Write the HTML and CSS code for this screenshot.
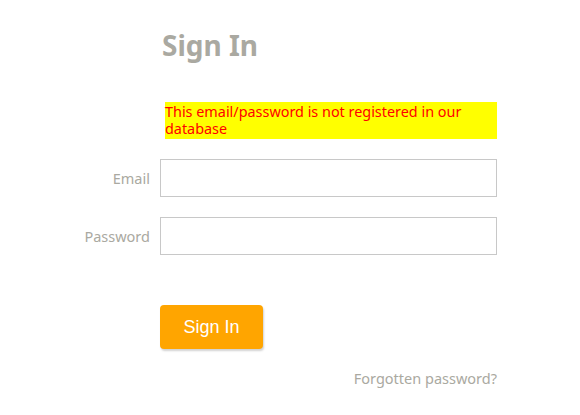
FILE: index.html
```html
<!DOCTYPE html>
<html>
<head>
<meta charset="utf-8">
<link rel="stylesheet" href="styles.css">
</head>
<body>
<div class="page">
  <h1 class="title">Sign In</h1>
  <div class="error">This email/password is not registered in our database</div>
  <form class="form">
    <label class="label" for="email">Email</label>
    <input class="input" id="email" type="text">
    <label class="label" for="password">Password</label>
    <input class="input" id="password" type="password">
    <div class="actions">
      <button class="btn" type="button">Sign In</button>
    </div>
    <div class="forgot-row">
      <a class="forgot">Forgotten password?</a>
    </div>
  </form>
</div>
</body>
</html>
```
FILE: styles.css
```css
html, body {
  margin: 0;
  padding: 0;
  background: #fff;
}
body {
  font-family: "Noto Sans", "DejaVu Sans", sans-serif;
  color: #a9a8a1;
}
.page {
  width: 497px;
  padding-top: 27px;
}
.title {
  margin: 0 0 0 162px;
  font-size: 28px;
  line-height: 36px;
  font-weight: 700;
  color: #aaa9a1;
  letter-spacing: 0;
}
.error {
  margin: 39px 0 0 165px;
  background: #ffff00;
  color: #ff0000;
  font-size: 14.4px;
  line-height: 17px;
  padding: 1px 0 3px 0;
  height: 33px;
}
.form {
  margin-top: 20px;
  display: grid;
  grid-template-columns: 150px 337px;
  column-gap: 10px;
  row-gap: 20px;
  align-items: center;
}
.label {
  text-align: right;
  font-size: 14.5px;
  color: #aaa9a1;
}
.input {
  box-sizing: border-box;
  height: 38px;
  width: 337px;
  margin: 0;
  border: 1px solid #c8c8c8;
  background: #fff;
}
.actions {
  grid-column: 2;
  margin-top: 30px;
}
.btn {
  box-sizing: border-box;
  width: 103px;
  height: 44px;
  background: #ffa500;
  border: none;
  border-radius: 4px;
  color: #fff;
  font-family: "Liberation Sans", Arial, sans-serif;
  font-size: 18px;
  box-shadow: 1px 2px 2px rgba(0,0,0,0.18);
  padding: 0;
}
.forgot-row {
  grid-column: 2;
  text-align: right;
  margin-top: -2px;
}
.forgot {
  font-size: 14.5px;
  color: #aaa9a1;
}
```
